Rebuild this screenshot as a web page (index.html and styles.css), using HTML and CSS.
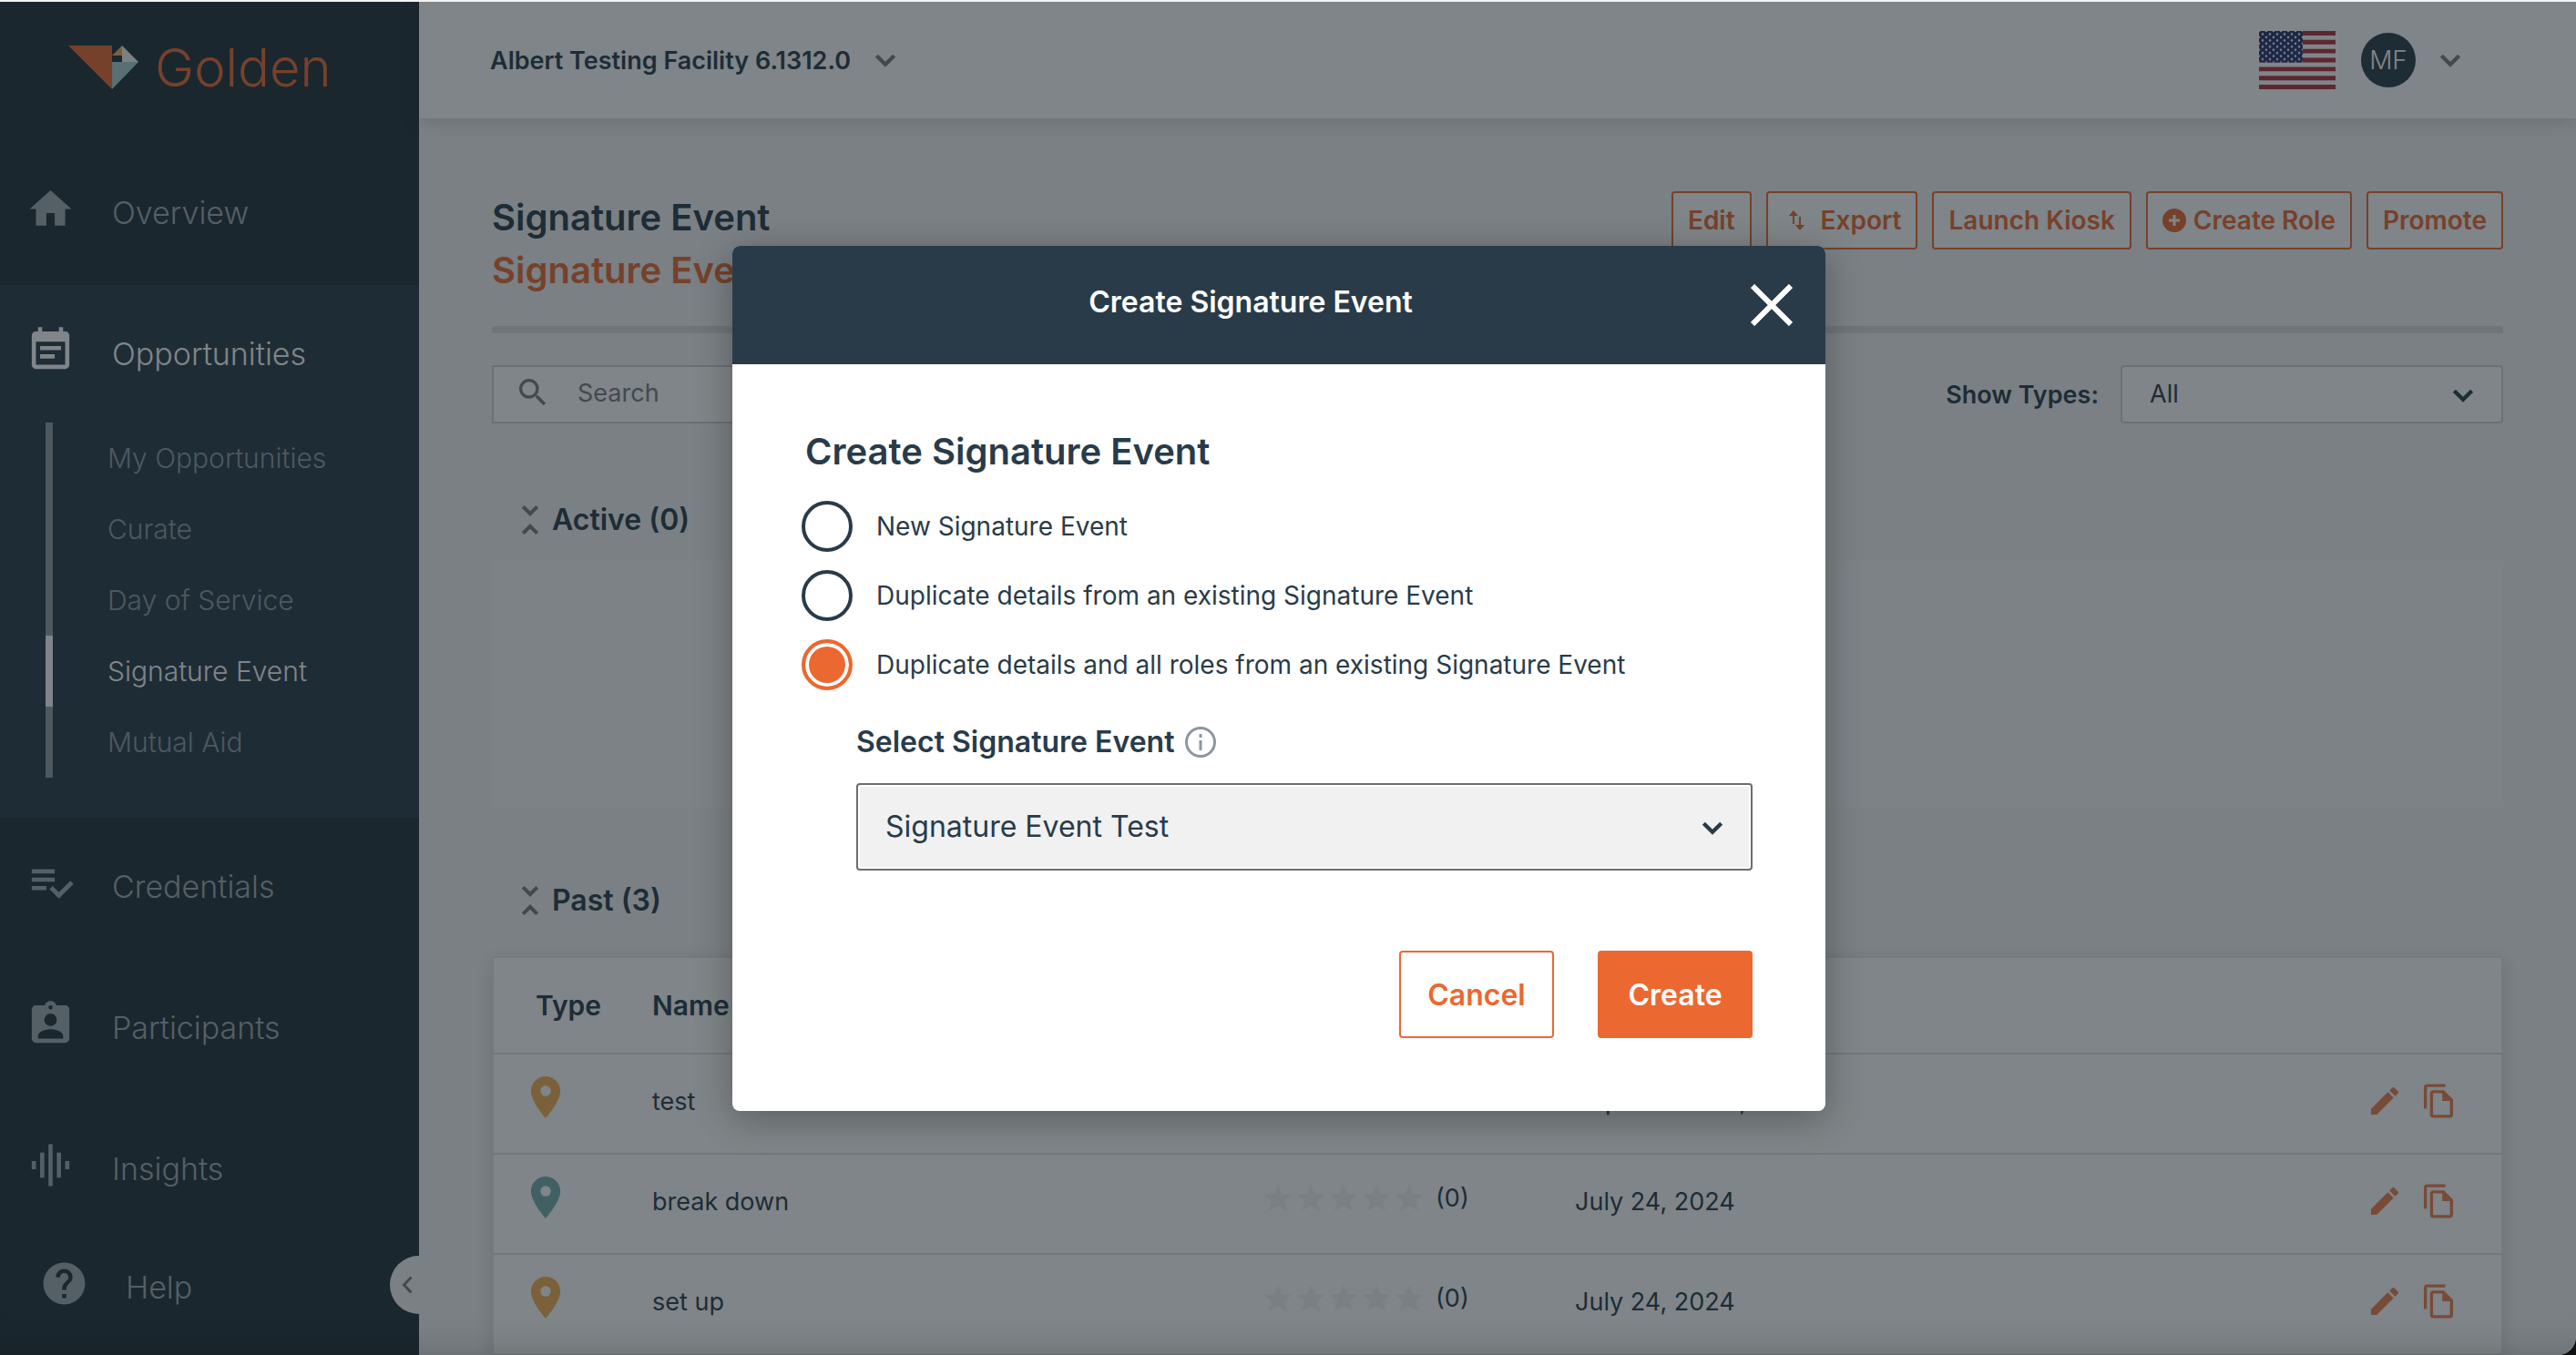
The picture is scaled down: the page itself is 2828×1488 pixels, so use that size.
FILE: index.html
```html
<!DOCTYPE html>
<html lang="en">
<head>
    <meta charset="UTF-8">
    <meta name="viewport" content="width=device-width, initial-scale=1.0">
    <title>Golden - Signature Event</title>
    <link rel="stylesheet" href="styles.css">
</head>
<body>
    <!-- shared icons -->
    <svg class="sprite" aria-hidden="true">
        <symbol id="chevron" viewBox="1 1 22 14"><path d="M3 3l9 9 9-9" fill="none" stroke="currentColor" stroke-width="4"/></symbol>
        <symbol id="collapse" viewBox="0 0 24 24"><path d="M7.41 18.59L8.83 20 12 16.83 15.17 20l1.41-1.41L12 14l-4.59 4.59zm9.18-13.18L15.17 4 12 7.17 8.83 4 7.41 5.41 12 10l4.59-4.59z"/></symbol>
        <symbol id="pin" viewBox="5 2 14 20"><path d="M12 2C8.13 2 5 5.13 5 9c0 5.25 7 13 7 13s7-7.750 7-13c0-3.870-3.130-7-7-7zm0 9.500a2.500 2.500 0 1 1 0-5 2.500 2.500 0 0 1 0 5z"/></symbol>
        <symbol id="pencil" viewBox="3 3 18 18"><path d="M3 17.250V21h3.750L17.810 9.940l-3.750-3.750L3 17.250zM20.710 7.040a1 1 0 0 0 0-1.410l-2.340-2.340a1 1 0 0 0-1.410 0l-1.830 1.830 3.750 3.750 1.830-1.830z"/></symbol>
        <symbol id="copy" viewBox="2 1 19 22"><path d="M16 1H4c-1.100 0-2 .9-2 2v14h2V3h12V1zm-1 4H8c-1.100 0-1.990.9-1.990 2L6 21c0 1.100.890 2 1.990 2H19c1.100 0 2-.9 2-2V11l-6-6zM8 21V7h6v5h5v9H8z"/></symbol>
        <symbol id="stars" viewBox="0 0 174 29">
            <path id="star" d="M15 0l4 10 11 1-8 7 3 11-10-6-10 6 3-11-8-7 11-1z"/>
            <use href="#star" x="36"/><use href="#star" x="72"/><use href="#star" x="108"/><use href="#star" x="144"/>
        </symbol>
    </svg>

    <div class="app">
        <nav class="sidebar">
            <a class="logo" href="#">
                <svg width="77" height="48" viewBox="0 0 77 48" aria-hidden="true">
                    <path fill="#eb6831" d="M0 0h48v48z"/>
                    <path fill="#f4b054" d="M59 0v11H48z"/>
                    <path fill="#f4f4f4" d="M59 0l18 18H59z"/>
                    <path fill="#a9cfd1" d="M48 18h29L48 48z"/>
                </svg>
                <span>Golden</span>
            </a>

            <a class="nav-item" href="#">
                <svg viewBox="0 0 24 24"><path d="M10 20v-6h4v6h5v-8h3L12 3 2 12h3v8z"/></svg>
                <span>Overview</span>
            </a>

            <div class="nav-group">
                <a class="nav-item active" href="#">
                    <svg viewBox="0 0 24 24"><path d="M17 10H7v2h10v-2zm2-7h-1V1h-2v2H8V1H6v2H5c-1.110 0-1.990.9-1.990 2L3 19c0 1.100.890 2 2 2h14c1.100 0 2-.9 2-2V5c0-1.100-.9-2-2-2zm0 16H5V8h14v11zm-5-5H7v2h7v-2z"/></svg>
                    <span>Opportunities</span>
                </a>
                <ul class="submenu">
                    <li><a href="#">My Opportunities</a></li>
                    <li><a href="#">Curate</a></li>
                    <li><a href="#">Day of Service</a></li>
                    <li><a class="current" href="#">Signature Event</a></li>
                    <li><a href="#">Mutual Aid</a></li>
                </ul>
            </div>

            <a class="nav-item" href="#">
                <svg viewBox="0 0 24 24"><path d="M14 10H3v2h11v-2zm0-4H3v2h11V6zM3 16h7v-2H3v2zm18.500-4.500L23 13l-6.990 7-4.510-4.500L13 14l3.010 3 5.490-5.500z" transform="translate(0 -.5)"/></svg>
                <span>Credentials</span>
            </a>
            <a class="nav-item" href="#">
                <svg viewBox="0 0 24 24"><path d="M19 3h-4.180C14.400 1.840 13.300 1 12 1s-2.400.84-2.820 2H5c-1.100 0-2 .9-2 2v14c0 1.100.9 2 2 2h14c1.100 0 2-.9 2-2V5c0-1.100-.9-2-2-2zm-7 0a1 1 0 1 1 0 2 1 1 0 0 1 0-2zm0 4a3 3 0 1 1 0 6 3 3 0 0 1 0-6zm6 12H6v-1.400c0-2 4-3.100 6-3.100s6 1.100 6 3.100V19z"/></svg>
                <span>Participants</span>
            </a>
            <a class="nav-item" href="#">
                <svg viewBox="0 0 24 24"><path d="M7 18h2V6H7v12zm4 4h2V2h-2v20zm-8-8h2v-4H3v4zm12 4h2V6h-2v12zm4-8v4h2v-4h-2z"/></svg>
                <span>Insights</span>
            </a>

            <div class="help-row">
                <a class="nav-item help" href="#">
                    <svg viewBox="0 0 24 24"><path d="M12 2C6.480 2 2 6.480 2 12s4.480 10 10 10 10-4.480 10-10S17.520 2 12 2zm1 17h-2v-2h2v2zm2.070-7.750l-.9.920C13.450 12.900 13 13.500 13 15h-2v-.5c0-1.100.45-2.100 1.170-2.830l1.240-1.260c.37-.36.590-.86.590-1.410 0-1.100-.9-2-2-2s-2 .9-2 2H8c0-2.210 1.790-4 4-4s4 1.790 4 4c0 .88-.36 1.680-.93 2.250z"/></svg>
                    <span>Help</span>
                </a>
                <button class="collapse-btn" aria-label="Collapse menu">
                    <svg width="12" height="20" viewBox="0 0 12 20"><path d="M10.500 1.500L2.500 10l8 8.500" fill="none" stroke="currentColor" stroke-width="3"/></svg>
                </button>
            </div>
        </nav>

        <div class="page">
            <header class="topbar">
                <button class="facility">Albert Testing Facility 6.1312.0 <svg class="chevron" width="24" height="15"><use href="#chevron"/></svg></button>
                <div class="account">
                    <svg class="flag" width="84" height="64" viewBox="0 0 84 65" preserveAspectRatio="none" role="img" aria-label="English (US)">
                        <defs>
                            <pattern id="dots" width="8" height="7" patternUnits="userSpaceOnUse">
                                <circle cx="4" cy="3.500" r="1.300" fill="#fff"/><circle cx="0" cy="0" r="1.300" fill="#fff"/><circle cx="8" cy="0" r="1.300" fill="#fff"/><circle cx="0" cy="7" r="1.300" fill="#fff"/><circle cx="8" cy="7" r="1.300" fill="#fff"/>
                            </pattern>
                        </defs>
                        <rect width="84" height="65" fill="#fff"/>
                        <path d="M0 2.500h84M0 12.500h84M0 22.500h84M0 32.500h84M0 42.500h84M0 52.500h84M0 62.500h84" stroke="#b22f3c" stroke-width="5"/>
                        <rect width="48" height="35" fill="#232f6b"/>
                        <rect width="48" height="35" fill="url(#dots)"/>
                    </svg>
                    <button class="user"><span class="avatar">MF</span><svg class="chevron" width="24" height="15"><use href="#chevron"/></svg></button>
                </div>
            </header>

            <main class="content">
                <div class="heading">
                    <div>
                        <h1>Signature Event</h1>
                        <h2>Signature Event Test</h2>
                    </div>
                    <div class="actions">
                        <button class="btn">Edit</button>
                        <button class="btn">
                            <svg width="34" height="22" viewBox="0 0 34 22"><path d="M12 15V4M19 7v11" stroke="currentColor" stroke-width="2"/><path d="M7 6l5-6 5 6zM14 16l5 6 5-6z"/></svg>
                            Export
                        </button>
                        <button class="btn">Launch Kiosk</button>
                        <button class="btn">
                            <svg width="26" height="26" viewBox="0 0 26 26"><path d="M13 0a13 13 0 1 0 0 26 13 13 0 0 0 0-26zm6 14.500h-4.500V19h-3v-4.500H7v-3h4.500V7h3v4.500H19z"/></svg>
                            Create Role
                        </button>
                        <button class="btn">Promote</button>
                    </div>
                </div>

                <div class="toolbar">
                    <label class="search">
                        <svg width="30" height="30" viewBox="3 3 18 18"><path d="M15.500 14h-.79l-.28-.27A6.470 6.470 0 0 0 16 9.500 6.500 6.500 0 1 0 9.500 16c1.610 0 3.090-.59 4.230-1.570l.27.28v.79l5 4.990L20.490 19l-4.990-5zm-6 0a4.500 4.500 0 1 1 0-9 4.500 4.500 0 0 1 0 9z"/></svg>
                        <input type="search" placeholder="Search" aria-label="Search">
                    </label>
                    <div class="filter">
                        <label for="types">Show Types:</label>
                        <div class="select">
                            <select id="types"><option>All</option></select>
                            <svg class="chevron" width="24" height="15"><use href="#chevron"/></svg>
                        </div>
                    </div>
                </div>

                <h3 class="section-title"><svg><use href="#collapse"/></svg>Active (0)</h3>
                <div class="empty"></div>

                <h3 class="section-title past"><svg><use href="#collapse"/></svg>Past (3)</h3>
                <table class="events">
                    <thead>
                        <tr><th class="col-type">Type</th><th class="col-name">Name</th><th class="col-rating">Rating</th><th>Date</th><th></th></tr>
                    </thead>
                    <tbody>
                        <tr>
                            <td><svg class="pin gold"><use href="#pin"/></svg></td>
                            <td>test</td>
                            <td><div class="rating"><svg class="stars"><use href="#stars"/></svg>(0)</div></td>
                            <td>September 24, 2024</td>
                            <td class="tools"><button aria-label="Edit"><svg width="30" height="30"><use href="#pencil"/></svg></button><button aria-label="Duplicate"><svg width="32" height="38"><use href="#copy"/></svg></button></td>
                        </tr>
                        <tr>
                            <td><svg class="pin teal"><use href="#pin"/></svg></td>
                            <td>break down</td>
                            <td><div class="rating"><svg class="stars"><use href="#stars"/></svg>(0)</div></td>
                            <td>July 24, 2024</td>
                            <td class="tools"><button aria-label="Edit"><svg width="30" height="30"><use href="#pencil"/></svg></button><button aria-label="Duplicate"><svg width="32" height="38"><use href="#copy"/></svg></button></td>
                        </tr>
                        <tr>
                            <td><svg class="pin gold"><use href="#pin"/></svg></td>
                            <td>set up</td>
                            <td><div class="rating"><svg class="stars"><use href="#stars"/></svg>(0)</div></td>
                            <td>July 24, 2024</td>
                            <td class="tools"><button aria-label="Edit"><svg width="30" height="30"><use href="#pencil"/></svg></button><button aria-label="Duplicate"><svg width="32" height="38"><use href="#copy"/></svg></button></td>
                        </tr>
                    </tbody>
                </table>
            </main>
        </div>

        <div class="overlay">
            <form class="modal" role="dialog" aria-labelledby="modal-title">
                <div class="modal-header">
                    <span id="modal-title">Create Signature Event</span>
                    <button type="button" class="close" aria-label="Close">
                        <svg width="46" height="46" viewBox="0 0 46 46"><path d="M2 2l42 42M44 2L2 44" stroke="currentColor" stroke-width="6"/></svg>
                    </button>
                </div>
                <div class="modal-body">
                    <h2>Create Signature Event</h2>
                    <div class="options">
                        <label><input type="radio" name="mode">New Signature Event</label>
                        <label><input type="radio" name="mode">Duplicate details from an existing Signature Event</label>
                        <label><input type="radio" name="mode" checked>Duplicate details and all roles from an existing Signature Event</label>
                    </div>
                    <div class="field">
                        <label for="event">Select Signature Event
                            <svg width="34" height="34" viewBox="0 0 34 34"><circle cx="17" cy="17" r="15.500" fill="none" stroke="currentColor" stroke-width="3"/><path d="M17 15v11M17 8v4" stroke="currentColor" stroke-width="3"/></svg>
                        </label>
                        <div class="select">
                            <select id="event"><option>Signature Event Test</option></select>
                            <svg class="chevron" width="24" height="15"><use href="#chevron"/></svg>
                        </div>
                    </div>
                    <div class="modal-actions">
                        <button type="button" class="cancel">Cancel</button>
                        <button type="submit" class="create">Create</button>
                    </div>
                </div>
            </form>
        </div>
    </div>
</body>
</html>
```
FILE: styles.css
```css
* {
    box-sizing: border-box;
}
html {
    background-color: #111;
}
body {
    margin: 0;
    border-top: 2px solid #f3f3f3;
    font-family: Inter, "Open Sans", sans-serif;
    font-size: 28px;
    color: #293b49;
}
h1, h2, h3, ul {
    margin: 0;
    padding: 0;
    font-weight: 600;
}
a {
    color: inherit;
    text-decoration: none;
}
button, input, select {
    font: inherit;
    color: inherit;
    border: none;
    background: none;
    padding: 0;
    cursor: pointer;
}
svg {
    fill: currentColor;
    flex: none;
}
.sprite {
    display: none;
}

.app {
    display: flex;
    height: calc(100vh - 2px);
    overflow: hidden;
    position: relative;
    background-color: #f4f4f6;
    border-bottom-right-radius: 20px;
}

/* sidebar */
.sidebar {
    width: 460px;
    flex: none;
    background-color: #212f38;
    color: #a2abb4;
}
.logo {
    display: flex;
    align-items: center;
    gap: 18px;
    height: 156px;
    padding: 0 0 12px 75px;
    color: #eb6831;
    font-size: 58px;
    font-weight: 300;
}
.nav-item {
    display: flex;
    align-items: center;
    gap: 40px;
    height: 155px;
    padding: 0 0 12px 28px;
    font-size: 34px;
    font-weight: 300;
}
.nav-item svg {
    width: 55px;
    height: 55px;
}
.nav-item span {
    padding-top: 8px;
}
.nav-group {
    height: 585px;
    background-color: #293b49;
}
.active {
    color: #fff;
}
.submenu {
    list-style: none;
    margin: -4px 0 0 50px;
}
.submenu a {
    display: block;
    border-left: 8px solid #909ba4;
    padding-left: 60px;
    font-size: 30px;
    line-height: 78px;
    font-weight: 300;
    color: #909ba4;
}
.submenu .current {
    border-color: #fff;
    color: #fff;
}
.help-row {
    display: flex;
    align-items: center;
    height: 96px;
}
.help {
    height: 96px;
    padding: 0 0 4px 43px;
}
.collapse-btn {
    width: 32px;
    height: 64px;
    margin-left: auto;
    padding-left: 6px;
    border-radius: 32px 0 0 32px;
    background-color: #f4f4f6;
    color: #7a7a80;
}

/* top bar */
.page {
    flex: 1;
    min-width: 0;
}
.topbar {
    display: flex;
    align-items: center;
    justify-content: space-between;
    height: 128px;
    padding: 0 126px 0 78px;
    background-color: #fff;
    box-shadow: 0 4px 20px rgba(0, 0, 0, .15);
}
.facility {
    display: flex;
    align-items: center;
    gap: 26px;
    font-size: 27px;
    font-weight: 600;
}
.topbar .chevron {
    color: #7a7a80;
}
.account {
    display: flex;
    align-items: center;
    gap: 28px;
}
.user {
    display: flex;
    align-items: center;
    gap: 26px;
}
.avatar {
    width: 60px;
    line-height: 60px;
    border-radius: 50%;
    background-color: #293b49;
    color: #fff;
    font-weight: 300;
}

/* content */
.content {
    padding: 80px;
}
.heading {
    display: flex;
    justify-content: space-between;
    padding-bottom: 32px;
    border-bottom: 8px solid #dcdcde;
}
.heading h1, .heading h2 {
    font-size: 40px;
    line-height: 58px;
}
.heading h2 {
    color: #eb6831;
}
.actions {
    display: flex;
    gap: 16px;
}
.btn {
    display: flex;
    align-items: center;
    gap: 8px;
    height: 64px;
    padding: 0 16px;
    border: 2px solid #eb6831;
    border-radius: 4px;
    background-color: #fff;
    color: #eb6831;
    font-weight: 600;
}
.toolbar {
    display: flex;
    justify-content: space-between;
    margin-top: 35px;
}
.search {
    display: flex;
    align-items: center;
    gap: 34px;
    width: 600px;
    height: 64px;
    padding: 0 0 4px 28px;
    border: 2px solid #d0d0d2;
    background-color: #fff;
    color: #7a7a80;
}
.search input {
    flex: 1;
    outline: none;
    font-size: 27px;
}
.search input::placeholder {
    color: #7a7a80;
}
.filter {
    display: flex;
    align-items: center;
    gap: 24px;
    font-size: 27px;
    font-weight: 600;
}
.select {
    position: relative;
}
.select select {
    appearance: none;
    width: 420px;
    height: 64px;
    padding: 0 30px 2px;
    border: 2px solid #d0d0d2;
    border-radius: 4px;
    background-color: #fff;
    font-weight: 400;
}
.select .chevron {
    position: absolute;
    right: 32px;
    top: calc(50% - 6px);
    pointer-events: none;
}
.section-title {
    display: flex;
    align-items: center;
    margin: 86px 0 25px 18px;
    font-size: 32px;
    line-height: 40px;
}
.section-title svg {
    width: 48px;
    height: 48px;
    margin: -4px 0;
    color: #7a7a80;
}
.empty {
    height: 270px;
    background-color: #f8f8fa;
}
.past {
    margin: 83px 0 41px 18px;
}

.events {
    width: 100%;
    table-layout: fixed;
    border-collapse: collapse;
    border: 2px solid #e6e6e8;
    background-color: #fff;
    box-shadow: 0 4px 20px rgba(0, 0, 0, .12);
}
.events th {
    height: 106px;
    padding: 0;
    text-align: left;
    font-size: 30px;
    font-weight: 600;
}
.events td {
    height: 110px;
    padding: 0 0 6px;
    border-top: 2px solid #e0e0e2;
    font-size: 27px;
}
.events th:first-child {
    padding-left: 46px;
}
.events td:first-child {
    padding-left: 40px;
}
.col-type {
    width: 175px;
}
.col-name {
    width: 672px;
}
.col-rating {
    width: 341px;
}
.pin {
    display: block;
    width: 34px;
    height: 46px;
    margin-bottom: 8px;
}
.gold {
    color: #f4b054;
}
.teal {
    color: #76adaf;
}
.rating {
    display: flex;
    align-items: center;
    gap: 14px;
    margin-bottom: 8px;
}
.stars {
    width: 174px;
    height: 29px;
    color: #f2f2f5;
}
.tools {
    text-align: right;
}
.tools button {
    margin-right: 28px;
    vertical-align: middle;
    color: #eb6831;
    opacity: .85;
}
.tools button:last-child {
    margin-right: 53px;
}
.tools svg {
    display: block;
}

/* modal */
.overlay {
    position: absolute;
    inset: 0;
    display: flex;
    align-items: center;
    justify-content: center;
    padding-right: 20px;
    background-color: rgba(22, 33, 39, .55);
    box-shadow: inset 0 -40px 40px -40px rgba(0, 0, 0, .2);
}
.modal {
    width: 1200px;
    max-width: 90%;
    border-radius: 8px;
    overflow: hidden;
    background-color: #fff;
    box-shadow: 0 8px 40px rgba(0, 0, 0, .3);
}
.modal-header {
    position: relative;
    display: flex;
    align-items: center;
    justify-content: center;
    height: 130px;
    padding: 0 62px 8px 0;
    background-color: #293b49;
    color: #fff;
    font-size: 32px;
    font-weight: 600;
}
.close {
    position: absolute;
    right: 36px;
    top: 42px;
}
.close svg {
    display: block;
}
.modal-body {
    padding: 68px 80px 80px 76px;
}
.modal-body h2 {
    padding-left: 4px;
    font-size: 40px;
    line-height: 56px;
}
.options {
    display: grid;
    gap: 20px;
    margin-top: 26px;
}
.options label {
    display: flex;
    align-items: center;
    gap: 26px;
}
.options input {
    appearance: none;
    width: 56px;
    height: 56px;
    margin: 0;
    border: 4px solid #293b49;
    border-radius: 50%;
}
.options input:checked {
    border-color: #eb6831;
    background-color: #eb6831;
    box-shadow: inset 0 0 0 4px #fff;
}
.field {
    margin-top: 36px;
    padding-left: 60px;
}
.field label {
    display: flex;
    align-items: center;
    gap: 12px;
    margin-bottom: 24px;
    font-size: 32px;
    line-height: 42px;
    font-weight: 600;
}
.field label svg {
    color: #8c979e;
}
.field select {
    width: 100%;
    height: 96px;
    border-color: #6d6d6f;
    background-color: #f1f1f1;
    box-shadow: inset 0 0 0 2px #fff;
    font-size: 32px;
}
.modal-actions {
    display: flex;
    justify-content: flex-end;
    gap: 48px;
    margin-top: 88px;
}
.modal-actions button {
    width: 170px;
    height: 96px;
    border: 2px solid #eb6831;
    border-radius: 4px;
    font-size: 32px;
    font-weight: 600;
}
.modal-actions .cancel {
    color: #eb6831;
}
.modal-actions .create {
    background-color: #eb6831;
    color: #fff;
}
```
